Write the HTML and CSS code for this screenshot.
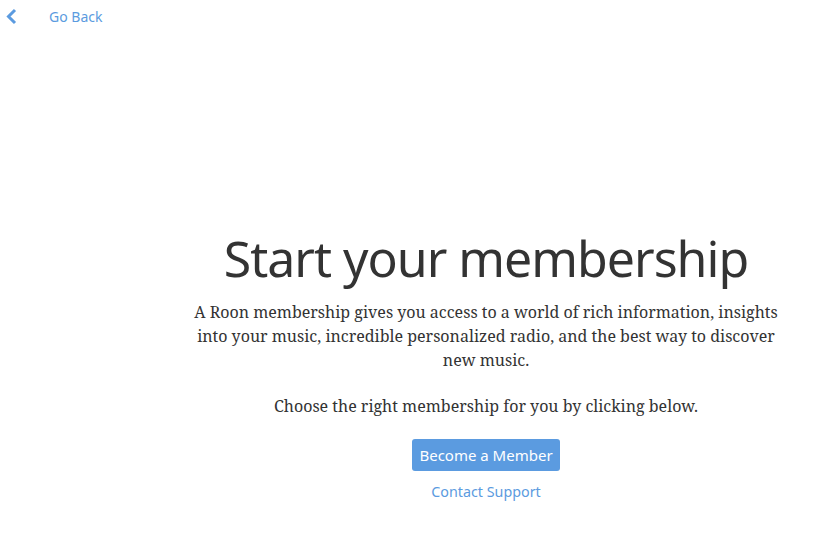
FILE: index.html
```html
<!DOCTYPE html>
<html lang="en">

<head>
    <meta charset="UTF-8">
    <title>Start your membership</title>
    <link rel="stylesheet" href="styles.css">
</head>

<body>
    <div class="topbar">
        <a class="back" href="javascript:;">
            <svg class="back-icon" width="16" height="17" viewBox="0 0 16 17">
                <path d="M12 2 L5.5 8.5 L12 15" fill="none" stroke="#5b9be0" stroke-width="3" />
            </svg>
            <span class="back-text">Go Back</span>
        </a>
    </div>
    <div class="page">
        <div class="side"></div>
        <div class="main">
            <h1 class="title">Start your membership</h1>
            <p class="intro">A Roon membership gives you access to a world of rich information, insights into your music, incredible personalized radio, and the best way to discover new music.</p>
            <p class="intro">Choose the right membership for you by clicking below.</p>
            <a class="btn" href="javascript:;">Become a Member</a>
            <a class="support" href="javascript:;">Contact Support</a>
        </div>
    </div>
</body>

</html>
```

FILE: styles.css
```css
* {
    margin: 0;
    padding: 0;
}

body {
    background: #fff;
    font-family: "Noto Sans", "Open Sans", sans-serif;
    color: #333;
}

a {
    text-decoration: none;
}

.topbar {
    height: 33px;
    display: flex;
    align-items: center;
}

.back {
    display: flex;
    align-items: center;
    padding-left: 3px;
    color: #5b9be0;
    font-size: 14px;
}

.back-icon {
    display: block;
}

.back-text {
    margin-left: 30px;
}

.page {
    display: flex;
}

.side {
    width: 150px;
    flex-shrink: 0;
}

.main {
    flex: 1;
    display: flex;
    flex-direction: column;
    align-items: center;
    padding-top: 191px;
}

.title {
    font-size: 50px;
    font-weight: normal;
    line-height: 68px;
    letter-spacing: -1px;
    color: #333;
}

.intro {
    width: 590px;
    margin-top: 8px;
    text-align: center;
    font-family: "Noto Serif", "DejaVu Serif", serif;
    font-size: 16px;
    line-height: 24px;
    color: #333;
}

.intro + .intro {
    margin-top: 22px;
}

.btn {
    display: block;
    margin-top: 21px;
    padding: 0 7.5px;
    height: 32px;
    line-height: 32px;
    background: #5b9be0;
    color: #fff;
    border-radius: 3px;
    font-size: 15px;
}

.support {
    display: block;
    margin-top: 11px;
    color: #5b9be0;
    font-size: 14.3px;
}
```
